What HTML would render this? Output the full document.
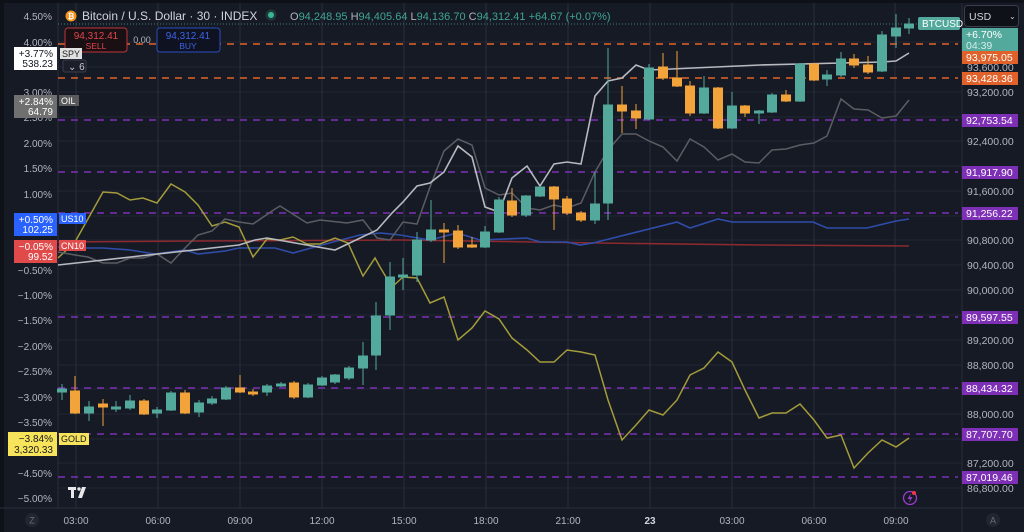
<!DOCTYPE html>
<html><head><meta charset="utf-8"><style>
html,body{margin:0;padding:0;background:#161a25;}
svg{display:block}
text{font-family:"Liberation Sans",sans-serif;}
</style></head><body>
<svg width="1024" height="532" viewBox="0 0 1024 532" xmlns="http://www.w3.org/2000/svg">
<rect width="1024" height="532" fill="#161a25"/>
<rect x="0" y="0" width="1024" height="3" fill="#0f1118"/>
<rect x="0" y="0" width="4" height="532" fill="#0f1118"/>
<!-- grid -->
<g stroke="#232735" stroke-width="1">
<line x1="58" y1="42" x2="962" y2="42"/><line x1="58" y1="67" x2="962" y2="67"/><line x1="58" y1="92" x2="962" y2="92"/><line x1="58" y1="117" x2="962" y2="117"/><line x1="58" y1="141" x2="962" y2="141"/><line x1="58" y1="166" x2="962" y2="166"/><line x1="58" y1="191" x2="962" y2="191"/><line x1="58" y1="216" x2="962" y2="216"/><line x1="58" y1="240" x2="962" y2="240"/><line x1="58" y1="265" x2="962" y2="265"/><line x1="58" y1="290" x2="962" y2="290"/><line x1="58" y1="315" x2="962" y2="315"/><line x1="58" y1="340" x2="962" y2="340"/><line x1="58" y1="365" x2="962" y2="365"/><line x1="58" y1="389" x2="962" y2="389"/><line x1="58" y1="414" x2="962" y2="414"/><line x1="58" y1="439" x2="962" y2="439"/><line x1="58" y1="463" x2="962" y2="463"/><line x1="58" y1="488" x2="962" y2="488"/>
</g>
<g stroke="#2a2e3b" stroke-width="1">
<line x1="76" y1="3" x2="76" y2="508"/><line x1="158" y1="3" x2="158" y2="508"/><line x1="240" y1="3" x2="240" y2="508"/><line x1="322" y1="3" x2="322" y2="508"/><line x1="404" y1="3" x2="404" y2="508"/><line x1="486" y1="3" x2="486" y2="508"/><line x1="568" y1="3" x2="568" y2="508"/><line x1="650" y1="3" x2="650" y2="508"/><line x1="732" y1="3" x2="732" y2="508"/><line x1="814" y1="3" x2="814" y2="508"/><line x1="895" y1="3" x2="895" y2="508"/>
</g>
<line x1="58" y1="3" x2="58" y2="508" stroke="#2a2e3b"/>
<line x1="962" y1="3" x2="962" y2="532" stroke="#2a2e3b"/>
<line x1="0" y1="508" x2="1024" y2="508" stroke="#2a2e3b"/>
<line x1="58" y1="24" x2="918" y2="24" stroke="#3f7f78" stroke-dasharray="1,2"/>
<g stroke-width="1.6" stroke-dasharray="7,6">
<line x1="58" y1="44" x2="958" y2="44" stroke="#e0622a"/>
<line x1="58" y1="78" x2="958" y2="78" stroke="#e0622a"/>
<line x1="58" y1="120" x2="958" y2="120" stroke="#7d2fb5"/>
<line x1="58" y1="172" x2="958" y2="172" stroke="#7d2fb5"/>
<line x1="58" y1="213" x2="958" y2="213" stroke="#7d2fb5"/>
<line x1="58" y1="317" x2="958" y2="317" stroke="#7d2fb5"/>
<line x1="58" y1="388" x2="958" y2="388" stroke="#7d2fb5"/>
<line x1="58" y1="434" x2="958" y2="434" stroke="#7d2fb5"/>
<line x1="58" y1="477" x2="958" y2="477" stroke="#7d2fb5"/>
</g>
<polyline fill="none" stroke="#8c2a30" stroke-width="1.5" points="58,242 200,241 400,240 600,243 760,245 909,246"/>
<polyline fill="none" stroke="#2f4ca8" stroke-width="1.6" points="58,247 75,248 103,248 130,250 155,254 185,250 198,254 225,251 239,248 275,248 293,253 333,242 360,235 380,233 400,235 430,240 457,233 480,240 527,238 540,242 567,242 580,245 593,243 677,222 690,228 718,219 732,222 813,222 827,228 867,228 896,221 909,219"/>
<polyline fill="none" stroke="#a49c3a" stroke-width="1.5" points="58,258 75,242 103,192 117,193 130,200 143,198 157,203 171,184 185,192 198,205 212,226 225,222 239,227 253,257 267,239 280,240 293,237 307,244 320,244 335,238 348,243 363,276 375,258 380,267 392,287 403,277 417,278 430,303 444,297 458,340 472,328 485,311 499,319 512,338 527,350 540,362 554,362 567,350 581,352 595,355 608,400 622,440 636,425 649,410 663,415 677,400 690,375 704,368 718,352 732,362 745,390 759,418 772,413 786,413 800,404 814,420 827,438 841,435 854,468 868,453 882,440 896,447 909,438"/>
<polyline fill="none" stroke="#5b5d63" stroke-width="1.5" points="58,252 75,255 88,257 103,263 117,263 130,258 143,258 157,254 171,263 185,248 198,235 212,231 225,219 239,222 253,224 275,209 280,206 307,223 320,220 347,223 363,220 377,238 390,240 403,222 417,224 430,187 444,151 458,139 472,145 485,188 499,195 512,193 527,208 540,210 554,205 567,208 581,203 595,172 608,150 622,134 636,134 649,141 663,147 677,161 690,139 704,147 718,160 732,154 745,162 759,163 772,150 786,149 800,145 814,143 827,136 841,99 854,109 868,110 882,118 896,116 909,100"/>
<polyline fill="none" stroke="#b8bac0" stroke-width="1.6" points="58,265 239,245 255,240 267,238 335,250 377,230 392,213 403,202 417,186 430,183 444,172 458,146 472,157 485,207 499,212 512,178 527,166 540,186 554,164 567,162 581,164 595,96 608,81 622,78 636,65 649,70 760,65 882,62 896,61 909,53"/>
<g stroke-width="1">
<g stroke="#53a99c" fill="#53a99c">
<line x1="62" y1="384" x2="62" y2="400"/><rect x="57.5" y="389" width="9" height="3"/>
<line x1="89" y1="401" x2="89" y2="421"/><rect x="84.5" y="407" width="9" height="6"/>
<line x1="116" y1="401" x2="116" y2="412"/><rect x="111.5" y="407" width="9" height="2"/>
<line x1="130" y1="395" x2="130" y2="410"/><rect x="125.5" y="401" width="9" height="7"/>
<line x1="157" y1="407" x2="157" y2="418"/><rect x="152.5" y="410" width="9" height="3"/>
<line x1="171" y1="391" x2="171" y2="411"/><rect x="166.5" y="393" width="9" height="17"/>
<line x1="199" y1="400" x2="199" y2="417"/><rect x="194.5" y="403" width="9" height="9"/>
<line x1="212" y1="396" x2="212" y2="405"/><rect x="207.5" y="399" width="9" height="4"/>
<line x1="226" y1="386" x2="226" y2="400"/><rect x="221.5" y="388" width="9" height="11"/>
<line x1="267" y1="384" x2="267" y2="396"/><rect x="262.5" y="386" width="9" height="6"/>
<line x1="281" y1="382" x2="281" y2="387"/><rect x="276.5" y="384" width="9" height="2"/>
<line x1="308" y1="383" x2="308" y2="398"/><rect x="303.5" y="385" width="9" height="12"/>
<line x1="322" y1="376" x2="322" y2="386"/><rect x="317.5" y="378" width="9" height="7"/>
<line x1="335" y1="374" x2="335" y2="384"/><rect x="330.5" y="375" width="9" height="7"/>
<line x1="349" y1="366" x2="349" y2="380"/><rect x="344.5" y="368" width="9" height="10"/>
<line x1="363" y1="342" x2="363" y2="385"/><rect x="358.5" y="356" width="9" height="12"/>
<line x1="376" y1="302" x2="376" y2="370"/><rect x="371.5" y="316" width="9" height="39"/>
<line x1="390" y1="262" x2="390" y2="330"/><rect x="385.5" y="277" width="9" height="38"/>
<line x1="403" y1="258" x2="403" y2="290"/><rect x="398.5" y="275" width="9" height="2"/>
<line x1="417" y1="232" x2="417" y2="282"/><rect x="412.5" y="240" width="9" height="35"/>
<line x1="431" y1="200" x2="431" y2="242"/><rect x="426.5" y="230" width="9" height="10"/>
<line x1="485" y1="226" x2="485" y2="248"/><rect x="480.5" y="232" width="9" height="15"/>
<line x1="499" y1="197" x2="499" y2="233"/><rect x="494.5" y="200" width="9" height="32"/>
<line x1="526" y1="195" x2="526" y2="217"/><rect x="521.5" y="196" width="9" height="19"/>
<line x1="540" y1="186" x2="540" y2="197"/><rect x="535.5" y="187" width="9" height="9"/>
<line x1="595" y1="172" x2="595" y2="224"/><rect x="590.5" y="204" width="9" height="16"/>
<line x1="608" y1="48" x2="608" y2="220"/><rect x="603.5" y="105" width="9" height="98"/>
<line x1="649" y1="64" x2="649" y2="120"/><rect x="644.5" y="68" width="9" height="51"/>
<line x1="704" y1="76" x2="704" y2="114"/><rect x="699.5" y="88" width="9" height="25"/>
<line x1="732" y1="92" x2="732" y2="129"/><rect x="727.5" y="106" width="9" height="22"/>
<line x1="759" y1="110" x2="759" y2="124"/><rect x="754.5" y="111" width="9" height="2"/>
<line x1="772" y1="93" x2="772" y2="113"/><rect x="767.5" y="95" width="9" height="17"/>
<line x1="800" y1="63" x2="800" y2="102"/><rect x="795.5" y="64" width="9" height="37"/>
<line x1="827" y1="70" x2="827" y2="86"/><rect x="822.5" y="75" width="9" height="4"/>
<line x1="841" y1="52" x2="841" y2="77"/><rect x="836.5" y="59" width="9" height="16"/>
<line x1="882" y1="31" x2="882" y2="72"/><rect x="877.5" y="35" width="9" height="36"/>
<line x1="896" y1="14" x2="896" y2="48"/><rect x="891.5" y="28" width="9" height="8"/>
<line x1="909" y1="18" x2="909" y2="34"/><rect x="904.5" y="24" width="9" height="4"/>
</g>
<g stroke="#f2a33a" fill="#f2a33a">
<line x1="75" y1="376" x2="75" y2="414"/><rect x="70.5" y="391" width="9" height="22"/>
<line x1="103" y1="399" x2="103" y2="426"/><rect x="98.5" y="404" width="9" height="3"/>
<line x1="144" y1="399" x2="144" y2="415"/><rect x="139.5" y="401" width="9" height="13"/>
<line x1="185" y1="390" x2="185" y2="414"/><rect x="180.5" y="393" width="9" height="20"/>
<line x1="240" y1="375" x2="240" y2="393"/><rect x="235.5" y="388" width="9" height="4"/>
<line x1="253" y1="389" x2="253" y2="396"/><rect x="248.5" y="392" width="9" height="2"/>
<line x1="294" y1="381" x2="294" y2="399"/><rect x="289.5" y="383" width="9" height="14"/>
<line x1="444" y1="223" x2="444" y2="263"/><rect x="439.5" y="230" width="9" height="2"/>
<line x1="458" y1="225" x2="458" y2="249"/><rect x="453.5" y="231" width="9" height="16"/>
<line x1="472" y1="237" x2="472" y2="248"/><rect x="467.5" y="245" width="9" height="2"/>
<line x1="512" y1="188" x2="512" y2="217"/><rect x="507.5" y="201" width="9" height="14"/>
<line x1="554" y1="186" x2="554" y2="230"/><rect x="549.5" y="187" width="9" height="12"/>
<line x1="567" y1="196" x2="567" y2="215"/><rect x="562.5" y="199" width="9" height="14"/>
<line x1="581" y1="211" x2="581" y2="222"/><rect x="576.5" y="213" width="9" height="7"/>
<line x1="622" y1="86" x2="622" y2="133"/><rect x="617.5" y="105" width="9" height="6"/>
<line x1="636" y1="104" x2="636" y2="129"/><rect x="631.5" y="111" width="9" height="7"/>
<line x1="663" y1="53" x2="663" y2="80"/><rect x="658.5" y="67" width="9" height="11"/>
<line x1="677" y1="51" x2="677" y2="87"/><rect x="672.5" y="78" width="9" height="8"/>
<line x1="690" y1="81" x2="690" y2="116"/><rect x="685.5" y="86" width="9" height="27"/>
<line x1="718" y1="87" x2="718" y2="129"/><rect x="713.5" y="88" width="9" height="40"/>
<line x1="745" y1="105" x2="745" y2="117"/><rect x="740.5" y="106" width="9" height="7"/>
<line x1="786" y1="90" x2="786" y2="102"/><rect x="781.5" y="95" width="9" height="6"/>
<line x1="814" y1="63" x2="814" y2="81"/><rect x="809.5" y="64" width="9" height="16"/>
<line x1="854" y1="54" x2="854" y2="68"/><rect x="849.5" y="59" width="9" height="6"/>
<line x1="868" y1="56" x2="868" y2="74"/><rect x="863.5" y="65" width="9" height="7"/>
</g>
</g>
<g font-size="10" fill="#b2b5be" text-anchor="end">
<text x="52" y="20">4.50%</text><text x="52" y="46">4.00%</text><text x="52" y="96">3.00%</text><text x="52" y="121">2.50%</text><text x="52" y="147">2.00%</text><text x="52" y="172">1.50%</text><text x="52" y="198">1.00%</text><text x="52" y="274">−0.50%</text><text x="52" y="299">−1.00%</text><text x="52" y="324">−1.50%</text><text x="52" y="350">−2.00%</text><text x="52" y="375">−2.50%</text><text x="52" y="401">−3.00%</text><text x="52" y="426">−3.50%</text><text x="52" y="477">−4.50%</text><text x="52" y="502">−5.00%</text>
</g>
<g font-size="10.5" fill="#b2b5be">
<text x="967" y="71">93,600.00</text><text x="967" y="96">93,200.00</text><text x="967" y="145">92,400.00</text><text x="967" y="195">91,600.00</text><text x="967" y="244">90,800.00</text><text x="967" y="269">90,400.00</text><text x="967" y="294">90,000.00</text><text x="967" y="344">89,200.00</text><text x="967" y="369">88,800.00</text><text x="967" y="418">88,000.00</text><text x="967" y="467">87,200.00</text><text x="967" y="492">86,800.00</text>
</g>
<g font-size="10.5" fill="#fff">
<rect x="962" y="51" width="56" height="13" fill="#e0622a"/><text x="966" y="61">93,975.05</text>
<rect x="962" y="72" width="56" height="13" fill="#e0622a"/><text x="966" y="82">93,428.36</text>
<rect x="962" y="114" width="56" height="13" fill="#7d2fb5"/><text x="966" y="124">92,753.54</text>
<rect x="962" y="166" width="56" height="13" fill="#7d2fb5"/><text x="966" y="176">91,917.90</text>
<rect x="962" y="207" width="56" height="13" fill="#7d2fb5"/><text x="966" y="217">91,256.22</text>
<rect x="962" y="311" width="56" height="13" fill="#7d2fb5"/><text x="966" y="321">89,597.55</text>
<rect x="962" y="382" width="56" height="13" fill="#7d2fb5"/><text x="966" y="392">88,434.32</text>
<rect x="962" y="428" width="56" height="13" fill="#7d2fb5"/><text x="966" y="438">87,707.70</text>
<rect x="962" y="471" width="56" height="13" fill="#7d2fb5"/><text x="966" y="481">87,019.46</text>
<rect x="962" y="28" width="56" height="23" fill="#53a99c"/><text x="966" y="38">+6.70%</text><text x="966" y="49" fill="#d6efeb">04:39</text>
<rect x="918" y="17" width="42" height="13" rx="2" fill="#53a99c"/><text x="922" y="27" font-size="10">BTCUSD</text>
</g>
<rect x="964.5" y="5.5" width="54" height="21" rx="3" fill="#0f1118" stroke="#3a3e4a"/>
<text x="969" y="20" font-size="10.5" fill="#d1d4dc">USD</text>
<text x="1009" y="19" font-size="8" fill="#d1d4dc">⌄</text>
<g font-size="10" fill="#b2b5be" text-anchor="middle">
<text x="76" y="524">03:00</text><text x="158" y="524">06:00</text><text x="240" y="524">09:00</text><text x="322" y="524">12:00</text><text x="404" y="524">15:00</text><text x="486" y="524">18:00</text><text x="568" y="524">21:00</text><text x="650" y="524" font-weight="bold" fill="#d1d4dc">23</text><text x="732" y="524">03:00</text><text x="814" y="524">06:00</text><text x="896" y="524">09:00</text>
</g>
<circle cx="32" cy="520" r="7" fill="#232632"/><text x="32" y="523.5" font-size="9" fill="#6a6d78" text-anchor="middle">Z</text>
<circle cx="993" cy="520" r="7" fill="#232632"/><text x="993" y="523.5" font-size="9" fill="#6a6d78" text-anchor="middle">A</text>
<g fill="#e8e8e8"><rect x="68" y="487" width="8" height="3"/><rect x="71" y="487" width="3" height="11"/><circle cx="79" cy="489" r="1.7"/><polygon points="82,487 86,487 82,498 78,498"/></g>
<circle cx="910" cy="498" r="6.5" fill="none" stroke="#9c3ad0" stroke-width="1.3"/>
<path d="M911,493 L907.5,499 L910,499 L909,503 L912.5,497 L910,497 Z" fill="#9c3ad0"/>
<circle cx="914" cy="493" r="2" fill="#f23645"/>
<circle cx="71" cy="16" r="5.5" fill="#f7931a"/><text x="71" y="19" font-size="8" fill="#fff" text-anchor="middle" font-weight="bold">₿</text>
<text x="82" y="20" font-size="12" fill="#d1d4dc">Bitcoin / U.S. Dollar · 30 · INDEX</text>
<circle cx="271" cy="15" r="5.5" fill="#1e3a36"/><circle cx="271" cy="15" r="3" fill="#3bb59a"/>
<text x="290" y="20" font-size="11" fill="#3fa594"><tspan fill="#b2b5be">O</tspan>94,248.95 <tspan fill="#b2b5be">H</tspan>94,405.64 <tspan fill="#b2b5be">L</tspan>94,136.70 <tspan fill="#b2b5be">C</tspan>94,312.41 +64.67 (+0.07%)</text>
<rect x="65" y="28" width="62" height="24" rx="3" fill="#1a0f13" stroke="#c0343d"/>
<text x="96" y="39" font-size="10" fill="#e0464f" text-anchor="middle">94,312.41</text><text x="96" y="49" font-size="8.5" fill="#e0464f" text-anchor="middle">SELL</text>
<text x="142" y="43" font-size="9" fill="#b2b5be" text-anchor="middle">0.00</text>
<rect x="157" y="28" width="63" height="24" rx="3" fill="#0f1220" stroke="#2b4dc0"/>
<text x="188" y="39" font-size="10" fill="#3c63e8" text-anchor="middle">94,312.41</text><text x="188" y="49" font-size="8.5" fill="#3c63e8" text-anchor="middle">BUY</text>
<rect x="14" y="47" width="43" height="23" fill="#ffffff"/><text x="53" y="57" font-size="10" fill="#131722" text-anchor="end">+3.77%</text><text x="53" y="67" font-size="10" fill="#131722" text-anchor="end">538.23</text>
<rect x="60" y="48" width="22" height="11" fill="#e0e0e0"/><text x="62" y="57" font-size="9" fill="#222">SPY</text>
<rect x="63" y="60" width="23" height="12" rx="2" fill="#1c1f2a" stroke="#3a3e4a"/><text x="68" y="70" font-size="10" fill="#c8cad0">⌄ 6</text>
<rect x="14" y="95" width="43" height="23" fill="#707070"/><text x="53" y="105" font-size="10" fill="#fff" text-anchor="end">+2.84%</text><text x="53" y="115" font-size="10" fill="#fff" text-anchor="end">64.79</text>
<rect x="59" y="95" width="20" height="11" fill="#5a5a5a"/><text x="61" y="104" font-size="9" fill="#fff">OIL</text>
<rect x="14" y="213" width="43" height="23" fill="#2962ff"/><text x="53" y="223" font-size="10" fill="#fff" text-anchor="end">+0.50%</text><text x="53" y="233" font-size="10" fill="#fff" text-anchor="end">102.25</text>
<rect x="59" y="213" width="27" height="11" fill="#2962ff"/><text x="61" y="222" font-size="9" fill="#fff">US10</text>
<rect x="14" y="240" width="43" height="23" fill="#e04a4a"/><text x="53" y="250" font-size="10" fill="#fff" text-anchor="end">−0.05%</text><text x="53" y="260" font-size="10" fill="#fff" text-anchor="end">99.52</text>
<rect x="59" y="240" width="27" height="11" fill="#e04a4a"/><text x="61" y="249" font-size="9" fill="#fff">CN10</text>
<rect x="8" y="432" width="49" height="24" fill="#f7e45a"/><text x="53" y="442" font-size="10" fill="#131722" text-anchor="end">−3.84%</text><text x="53" y="453" font-size="10" fill="#131722" text-anchor="end">3,320.33</text>
<rect x="59" y="433" width="30" height="12" fill="#f7e45a"/><text x="61" y="442" font-size="9" fill="#131722">GOLD</text>
</svg>
</body></html>
